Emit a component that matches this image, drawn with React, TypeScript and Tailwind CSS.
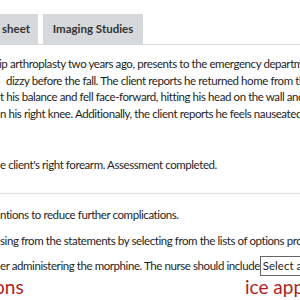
export default function App() {
  const font = { fontFamily: 'Lato, "Noto Sans", sans-serif' };
  return (
    <div className="w-[300px] h-[300px] overflow-hidden bg-white text-[#1e1e1e] relative" style={font}>
      <div className="pt-[14px] flex items-end border-b border-[#d8d8d8]">
        <div className="w-[38px] h-[30px] bg-[#d6d9dc] flex items-center pl-[2px] text-[11.5px] font-bold text-[#333]">sheet</div>
        <div className="ml-[5px] w-[100px] h-[30px] bg-[#d6d9dc] flex items-center justify-center text-[11.5px] font-bold text-[#333]">Imaging Studies</div>
      </div>
      <div className="text-[11.5px] tracking-[-0.42px] leading-[16.5px] whitespace-nowrap mt-[11px]">
        <div className="ml-[-1px]">ip arthroplasty two years ago, presents to the emergency department</div>
        <div className="ml-[6px]">dizzy before the fall. The client reports he returned home from the</div>
        <div>t his balance and fell face-forward, hitting his head on the wall and</div>
        <div>n his right knee. Additionally, the client reports he feels nauseated</div>
        <div className="mt-[35px]">e client's right forearm. Assessment completed.</div>
      </div>
      <div className="mt-[19px] border-t border-[#e0e0e0]" />
      <div className="text-[11.5px] tracking-[-0.42px] whitespace-nowrap">
        <div className="mt-[13px] leading-[16px]">ntions to reduce further complications.</div>
        <div className="mt-[10px] leading-[16px]">sing from the statements by selecting from the lists of options provided.</div>
        <div className="mt-[7px] leading-[20px] flex items-center">
          <span>er administering the morphine. The nurse should include</span>
          <span className="border border-[#666] h-[20px] px-[2px] flex items-center tracking-normal">Select an option</span>
        </div>
        <div className="flex text-[19px] leading-[22px] text-[#b01e1e] tracking-normal">
          <span className="ml-[-6px] w-[251px] shrink-0">ons</span>
          <span>ice appropriate</span>
        </div>
      </div>
    </div>
  );
}
